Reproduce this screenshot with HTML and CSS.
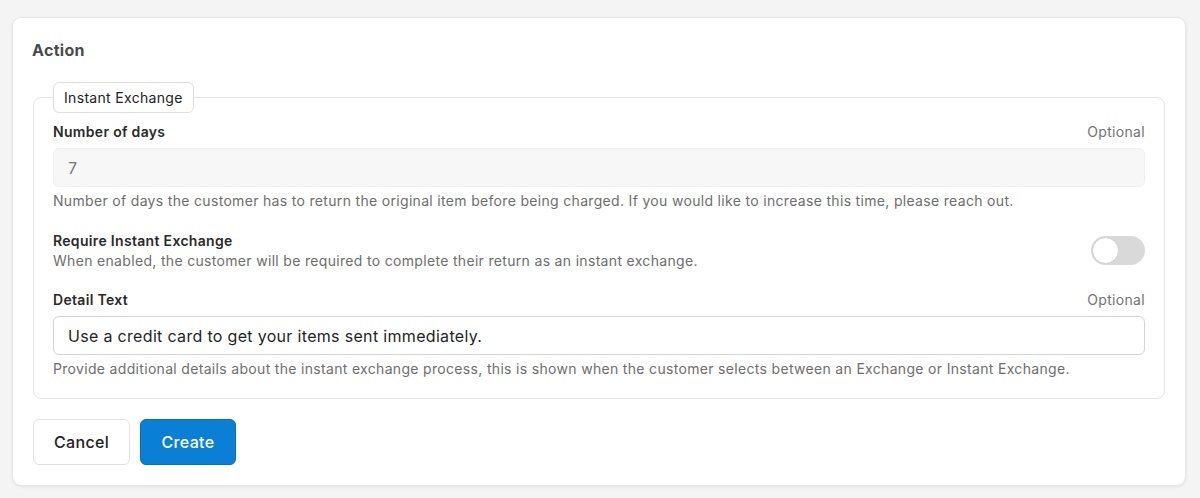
FILE: index.html
```html
<!DOCTYPE html>
<html lang="en">
<head>
<meta charset="utf-8">
<title>Action</title>
<link rel="stylesheet" href="styles.css">
</head>
<body>
<div class="card">
  <h2 class="title">Action</h2>
  <fieldset class="group">
    <legend class="legend">Instant Exchange</legend>
    <div class="field">
      <div class="label-row">
        <span class="label">Number of days</span>
        <span class="optional">Optional</span>
      </div>
      <div class="input input-disabled">7</div>
      <p class="help">Number of days the customer has to return the original item before being charged. If you would like to increase this time, please reach out.</p>
    </div>
    <div class="field toggle-field">
      <div class="toggle-text">
        <span class="label">Require Instant Exchange</span>
        <p class="help">When enabled, the customer will be required to complete their return as an instant exchange.</p>
      </div>
      <span class="toggle"><span class="knob"></span></span>
    </div>
    <div class="field">
      <div class="label-row">
        <span class="label">Detail Text</span>
        <span class="optional">Optional</span>
      </div>
      <div class="input">Use a credit card to get your items sent immediately.</div>
      <p class="help">Provide additional details about the instant exchange process, this is shown when the customer selects between an Exchange or Instant Exchange.</p>
    </div>
  </fieldset>
  <div class="actions">
    <button class="btn btn-secondary">Cancel</button>
    <button class="btn btn-primary">Create</button>
  </div>
</div>
</body>
</html>
```
FILE: styles.css
```css
* { box-sizing: border-box; }
html, body { margin: 0; }
body {
  background: #f4f4f4;
  font-family: Inter, "Noto Sans", "Liberation Sans", sans-serif;
  letter-spacing: 0.02em;
  padding: 17px 14px 12px 12px;
  color: #2a2a2a;
}
.card {
  background: #fff;
  border: 1px solid #e6e6e6;
  border-radius: 9px;
  box-shadow: 0 1px 3px rgba(0,0,0,0.08);
  padding: 20px 20px 20px 20px;
}
.title {
  margin: 0 0 20px -1px;
  font-size: 16px;
  line-height: 24px;
  font-weight: 700;
  color: #4a4a4a;
}
.group {
  margin: 0;
  border: 1px solid #e4e4e4;
  border-radius: 8px;
  padding: 9px 19px 19px 19px;
  min-width: 0;
}
.legend {
  padding: 6px 10px;
  border: 1px solid #dedede;
  border-radius: 6px;
  font-size: 14px;
  line-height: 17px;
  color: #222;
  background: #fff;
}
.field + .field { margin-top: 19px; }
.label-row {
  display: flex;
  justify-content: space-between;
  align-items: center;
}
.label {
  font-size: 14px;
  line-height: 20px;
  font-weight: 600;
  color: #2a2a2a;
}
.optional {
  font-size: 14px;
  line-height: 20px;
  color: #737373;
}
.input {
  margin-top: 6px;
  height: 39px;
  border: 1px solid #d4d4d4;
  border-radius: 6px;
  padding: 0 14px;
  display: flex;
  align-items: center;
  font-size: 16px;
  color: #1f1f1f;
  background: #fff;
}
.input-disabled {
  background: #f7f7f7;
  border-color: #f0f0f0;
  color: #777;
}
.help {
  margin: 4px 0 0 0;
  font-size: 14px;
  line-height: 20px;
  color: #6e6e6e;
}
.toggle-field {
  display: flex;
  align-items: center;
  justify-content: space-between;
}
.toggle-text .help { margin-top: 0; }
.toggle {
  width: 54px;
  height: 29px;
  border-radius: 15px;
  background: #d9d9d9;
  display: flex;
  align-items: center;
  padding: 1px;
  flex-shrink: 0;
}
.knob {
  width: 27px;
  height: 27px;
  border-radius: 50%;
  background: #fff;
  border: 1px solid #cfcfcf;
}
.actions {
  display: flex;
  gap: 10px;
  margin-top: 20px;
}
.btn {
  height: 46px;
  border-radius: 6px;
  font-family: inherit;
  letter-spacing: inherit;
  font-size: 16px;
  font-weight: 500;
  padding: 0;
  cursor: pointer;
}
.btn-secondary {
  width: 97px;
  background: #fff;
  border: 1px solid #e2e2e2;
  color: #222;
}
.btn-primary {
  width: 96px;
  background: #0a7fd6;
  border: 1px solid #0870bf;
  color: #fff;
}
```
